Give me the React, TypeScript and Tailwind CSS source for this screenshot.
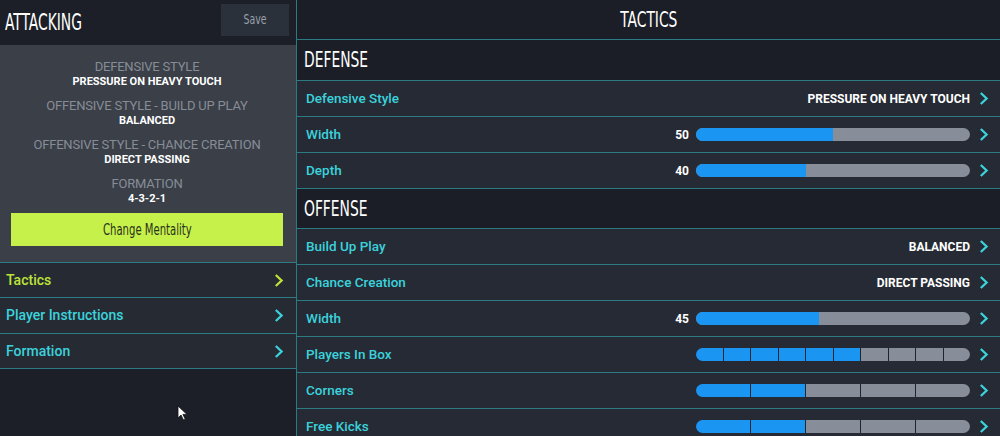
import type { ReactNode } from 'react';

const cond = 'font-["DejaVu_Sans_Condensed","DejaVu_Sans",sans-serif]';
const body = 'font-["Roboto","Liberation_Sans",sans-serif]';

function Chevron({ color = '#3bd2dc' }: { color?: string }) {
  return (
    <svg width="10" height="13" viewBox="0 0 10 13" className="shrink-0">
      <polyline points="1.8,1 7.6,6.5 1.8,12" fill="none" stroke={color} strokeWidth="2.3" />
    </svg>
  );
}

function Info({ label, value }: { label: string; value: string }) {
  return (
    <div className="flex flex-col items-center leading-none">
      <div className="text-[13px] text-[#878d97] tracking-[-0.2px]">{label}</div>
      <div className="mt-[3px] text-[11px] font-bold text-white">{value}</div>
    </div>
  );
}

function NavRow({ label, active, h }: { label: string; active?: boolean; h: string }) {
  return (
    <div className={`flex items-center justify-between border-b border-[#2c7a83] bg-[#262a33] pl-[6px] pr-[12px] ${h}`}>
      <span className={`text-[14px] font-medium ${active ? 'text-[#bde23a]' : 'text-[#3bd2dc]'}`}>{label}</span>
      <Chevron color={active ? '#bde23a' : '#3bd2dc'} />
    </div>
  );
}

function Slider({ value }: { value: number }) {
  return (
    <div className="flex items-center">
      <span className="mr-[7px] text-[12px] font-bold text-white">{value}</span>
      <div className="relative h-[13px] w-[274px] overflow-hidden rounded-full bg-[#878e99]">
        <div className="h-full bg-[#1b95f2]" style={{ width: `${value}%` }} />
      </div>
    </div>
  );
}

function Segments({ total, filled }: { total: number; filled: number }) {
  return (
    <div className="flex h-[13px] w-[274px] gap-px overflow-hidden rounded-full bg-[#1d2630]">
      {Array.from({ length: total }).map((_, i) => (
        <div key={i} className={`h-full flex-1 ${i < filled ? 'bg-[#1b95f2]' : 'bg-[#878e99]'}`} />
      ))}
    </div>
  );
}

function Row({ label, children }: { label: string; children?: ReactNode }) {
  return (
    <div className="flex h-[36px] shrink-0 items-center justify-between border-b border-[#2c7a83] bg-[#262a34] pl-[9px] pr-[11px]">
      <span className="text-[13.5px] font-medium text-[#3bd2dc]">{label}</span>
      <div className="flex items-center gap-[9px]">
        {children}
        <Chevron />
      </div>
    </div>
  );
}

function Value({ text }: { text: string }) {
  return <span className="text-[12px] font-bold text-white">{text}</span>;
}

function SectionHead({ title, h }: { title: string; h: string }) {
  return (
    <div className={`flex shrink-0 items-center border-b border-[#2c7a83] bg-[#1b1e26] pl-[7px] ${h}`}>
      <span className={`${cond} origin-left scale-x-[0.7] text-[22px] leading-none text-white`}>{title}</span>
    </div>
  );
}

export default function App() {
  return (
    <div className={`${body} relative flex h-[436px] w-[1000px] overflow-hidden bg-[#1c1f27]`}>
      {/* left column */}
      <div className="flex w-[297px] shrink-0 flex-col border-r border-[#2c7a83]">
        <div className="flex h-[45px] shrink-0 items-center justify-between pl-[5px] pr-[7px]">
          <span className={`${cond} origin-left scale-x-[0.67] text-[23px] leading-none text-white`}>ATTACKING</span>
          <button className="mt-[-6px] flex h-[32px] w-[68px] items-center justify-center bg-[#2b313b]">
            <span className={`${cond} scale-x-[0.72] text-[14.5px] text-[#9aa0a9]`}>Save</span>
          </button>
        </div>
        <div className="flex h-[217px] shrink-0 flex-col bg-[#3a3f48] px-[11px] pr-[13px] pt-[15px]">
          <div className="flex flex-col gap-[12px]">
            <Info label="DEFENSIVE STYLE" value="PRESSURE ON HEAVY TOUCH" />
            <Info label="OFFENSIVE STYLE - BUILD UP PLAY" value="BALANCED" />
            <Info label="OFFENSIVE STYLE - CHANCE CREATION" value="DIRECT PASSING" />
            <Info label="FORMATION" value="4-3-2-1" />
          </div>
          <button className="mt-[9px] flex h-[33px] w-full items-center justify-center bg-[#c6f14a]">
            <span className={`${cond} scale-x-[0.7] text-[16px] text-[#2b3120]`}>Change Mentality</span>
          </button>
        </div>
        <div className="border-t border-[#2c7a83]">
          <NavRow label="Tactics" active h="h-[35px]" />
          <NavRow label="Player Instructions" h="h-[36px]" />
          <NavRow label="Formation" h="h-[35px]" />
        </div>
      </div>

      {/* right column */}
      <div className="flex min-w-0 flex-1 flex-col">
        <div className="flex h-[40px] shrink-0 items-center justify-center border-b border-[#2c7a83] bg-[#1b1e26]">
          <span className={`${cond} scale-x-[0.7] text-[22px] leading-none text-white`}>TACTICS</span>
        </div>
        <SectionHead title="DEFENSE" h="h-[41px]" />
        <Row label="Defensive Style"><Value text="PRESSURE ON HEAVY TOUCH" /></Row>
        <Row label="Width"><Slider value={50} /></Row>
        <Row label="Depth"><Slider value={40} /></Row>
        <SectionHead title="OFFENSE" h="h-[40px]" />
        <Row label="Build Up Play"><Value text="BALANCED" /></Row>
        <Row label="Chance Creation"><Value text="DIRECT PASSING" /></Row>
        <Row label="Width"><Slider value={45} /></Row>
        <Row label="Players In Box"><Segments total={10} filled={6} /></Row>
        <Row label="Corners"><Segments total={5} filled={2} /></Row>
        <Row label="Free Kicks"><Segments total={5} filled={2} /></Row>
      </div>

      {/* mouse pointer */}
      <svg className="absolute left-[177px] top-[405px]" width="11" height="16" viewBox="0 0 11 16">
        <path d="M1 1 L1 13 L4 10 L6.5 15 L8.3 14.2 L5.9 9.4 L10 9.4 Z" fill="white" stroke="#111" strokeWidth="0.8" />
      </svg>
    </div>
  );
}
